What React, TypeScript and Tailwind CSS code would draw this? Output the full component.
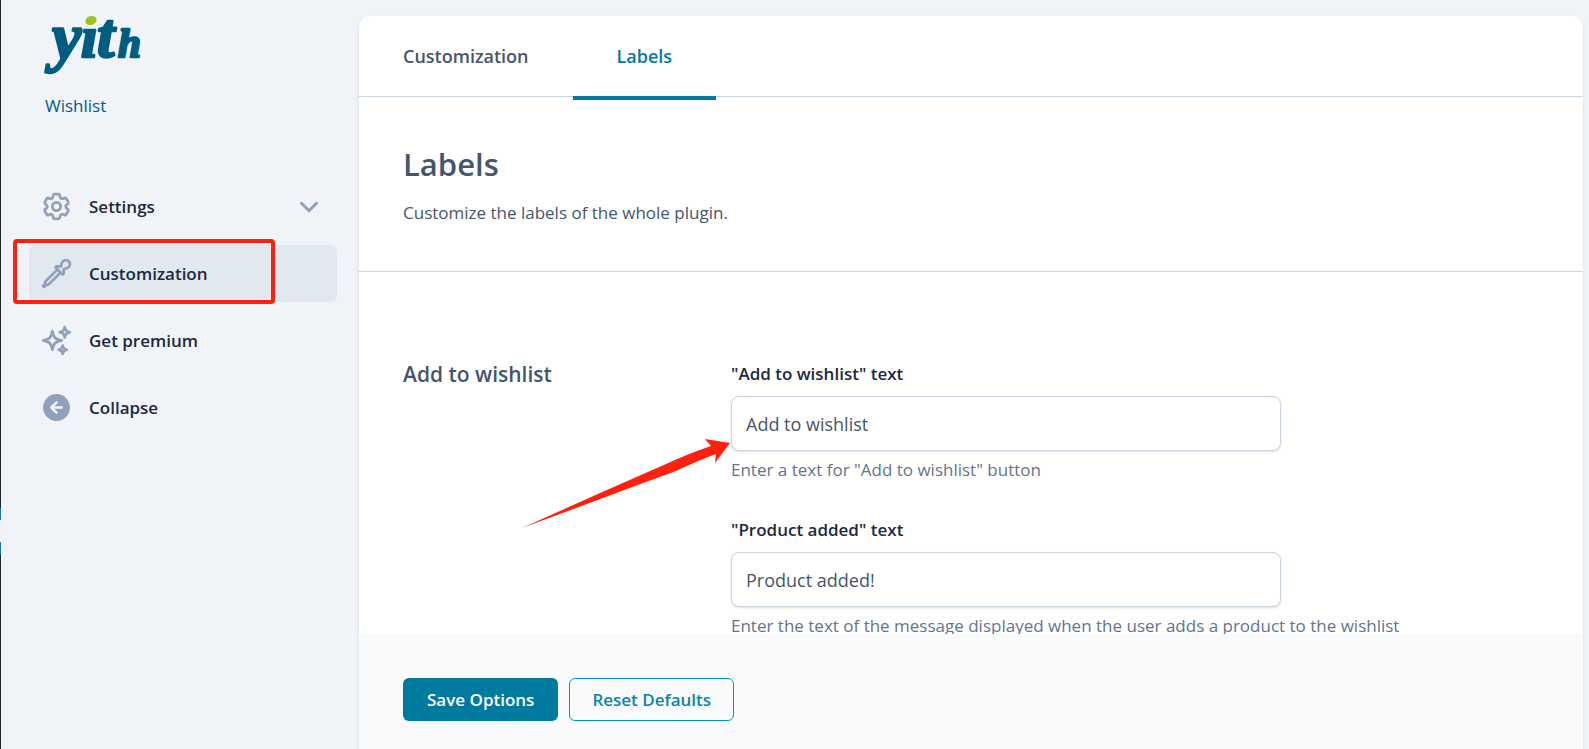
import {
  HiOutlineChevronDown,
  HiOutlineCog6Tooth,
  HiOutlineEyeDropper,
  HiOutlineSparkles,
} from "react-icons/hi2";

function Logo() {
  return (
    <svg
      role="img"
      aria-label="yith"
      viewBox="-6 -15 110 81"
      className="-ml-[6px] w-[110px] h-[81px] overflow-visible fill-[#005d80] stroke-[#005d80] font-['Liberation_Serif',serif] font-bold italic"
    >
      <g strokeWidth="2.5" strokeLinejoin="round">
        <text x="7" y="44" fontSize="66">y</text>
        <text x="36" y="42" fontSize="60">ı</text>
        <text x="52" y="42" fontSize="63">t</text>
        <text x="73" y="42" fontSize="41">h</text>
      </g>
      <ellipse
        cx="46"
        cy="5.5"
        rx="5.8"
        ry="4.4"
        transform="rotate(-20 46 5.5)"
        stroke="none"
        className="fill-[#9bc31c]"
      />
    </svg>
  );
}

function CollapseIcon({ className }: { className: string }) {
  return (
    <svg viewBox="0 0 24 24" className={className} aria-hidden="true">
      <circle cx="12" cy="12" r="9.75" fill="currentColor" />
      <path
        d="M15.8 12H8.4M12 8.2 8.2 12l3.8 3.8"
        fill="none"
        stroke="#f0f4f9"
        strokeWidth="1.8"
        strokeLinecap="round"
        strokeLinejoin="round"
      />
    </svg>
  );
}

function Sidebar() {
  const item =
    "relative flex items-center gap-4 h-[57px] pl-[11px] pr-4 rounded-md";
  const icon = "size-[33px] shrink-0 text-slate-400";

  return (
    <aside className="w-[358px] shrink-0 pl-7 pr-[22px]">
      <a href="#" className="block pl-4 text-[#005d80]">
        <Logo />
        <span className="block mt-[13px] leading-6 font-medium">Wishlist</span>
      </a>

      <nav className="flex flex-col gap-[10px] mt-[60px] text-slate-800 font-semibold">
        <a href="#" className={item}>
          <HiOutlineCog6Tooth className={icon} strokeWidth={2} />
          Settings
          <HiOutlineChevronDown
            className="size-6 ml-auto text-slate-400"
            strokeWidth={3}
          />
        </a>
        <a href="#" className={`${item} bg-slate-200`}>
          <HiOutlineEyeDropper className={icon} strokeWidth={2} />
          Customization
          <span className="absolute -left-4 -top-[6px] w-[262px] h-[65px] border-4 border-[#ff2010] rounded-sm" />
        </a>
        <a href="#" className={item}>
          <HiOutlineSparkles className={icon} strokeWidth={2} />
          Get premium
        </a>
        <a href="#" className={item}>
          <CollapseIcon className={icon} />
          Collapse
        </a>
      </nav>
    </aside>
  );
}

function Arrow() {
  return (
    <svg
      viewBox="0 0 209 90"
      className="absolute right-full top-[43px] w-[209px] h-[90px] fill-[#ff2010]"
    >
      <path d="M0 89 L78 54 L144 25 Q168 14 189 7 L183 0 L208 4 L193 24 L194 15 Q175 22 154 32 L113 47 L65 65 Z" />
    </svg>
  );
}

type FieldProps = {
  id: string;
  label: string;
  value: string;
  help: string;
  arrow?: boolean;
};

function Field({ id, label, value, help, arrow = false }: FieldProps) {
  return (
    <div>
      <label
        htmlFor={id}
        className="block leading-6 text-slate-800 font-semibold"
      >
        {label}
      </label>
      <div className="relative mt-[10px] max-w-[550px]">
        <input
          id={id}
          type="text"
          defaultValue={value}
          className="block w-full h-[55px] px-[14px] text-lg text-slate-600 bg-white border border-slate-300 rounded-lg shadow-sm"
        />
        {arrow && <Arrow />}
      </div>
      <p className="mt-[7px] leading-6 text-slate-500">{help}</p>
    </div>
  );
}

export default function App() {
  return (
    <div className="flex h-screen overflow-hidden bg-[#f0f4f9] text-[17px] font-['Open_Sans',sans-serif]">
      <div className="flex flex-col w-px shrink-0 bg-[#1d2327] pt-[508px]">
        <div className="h-3 bg-[#2271b1]" />
        <div className="h-[22px] bg-[#f0f0f1]" />
        <div className="h-[13px] bg-[#2271b1]" />
      </div>
      <Sidebar />

      <main className="flex flex-col flex-1 min-w-0 mt-4 mr-[6px] bg-white rounded-t-xl shadow-md">
        <div className="flex h-[81px] shrink-0 border-b border-slate-300 text-lg font-semibold">
          <a href="#" className="flex items-center px-11 text-slate-600">
            Customization
          </a>
          <a
            href="#"
            className="flex items-center h-[84px] px-11 text-[#007a9f] border-b-4 border-[#007a9f]"
          >
            Labels
          </a>
        </div>

        <div className="flex-1 min-h-0 overflow-hidden">
          <header className="h-[175px] px-11 pt-[47px] border-b border-slate-300 text-slate-600">
            <h1 className="text-[31px] leading-10 font-semibold">Labels</h1>
            <p className="mt-[17px] leading-6">
              Customize the labels of the whole plugin.
            </p>
          </header>

          <section className="flex px-11 pt-[90px]">
            <h2 className="w-[328px] shrink-0 text-[21px] leading-6 text-slate-600 font-semibold">
              Add to wishlist
            </h2>
            <div className="flex-1 flex flex-col gap-9">
              <Field
                id="add-to-wishlist"
                label={'"Add to wishlist" text'}
                value="Add to wishlist"
                help={'Enter a text for "Add to wishlist" button'}
                arrow
              />
              <Field
                id="product-added"
                label={'"Product added" text'}
                value="Product added!"
                help="Enter the text of the message displayed when the user adds a product to the wishlist"
              />
            </div>
          </section>
        </div>

        <footer className="flex gap-[11px] h-[115px] shrink-0 px-11 pt-11 bg-[#f9fafc]">
          <button className="h-[43px] px-6 rounded-md bg-[#007a9f] text-white font-semibold">
            Save Options
          </button>
          <button className="h-[43px] px-[22px] rounded-md border border-[#0097c0] text-[#0a84ad] font-semibold">
            Reset Defaults
          </button>
        </footer>
      </main>
    </div>
  );
}
